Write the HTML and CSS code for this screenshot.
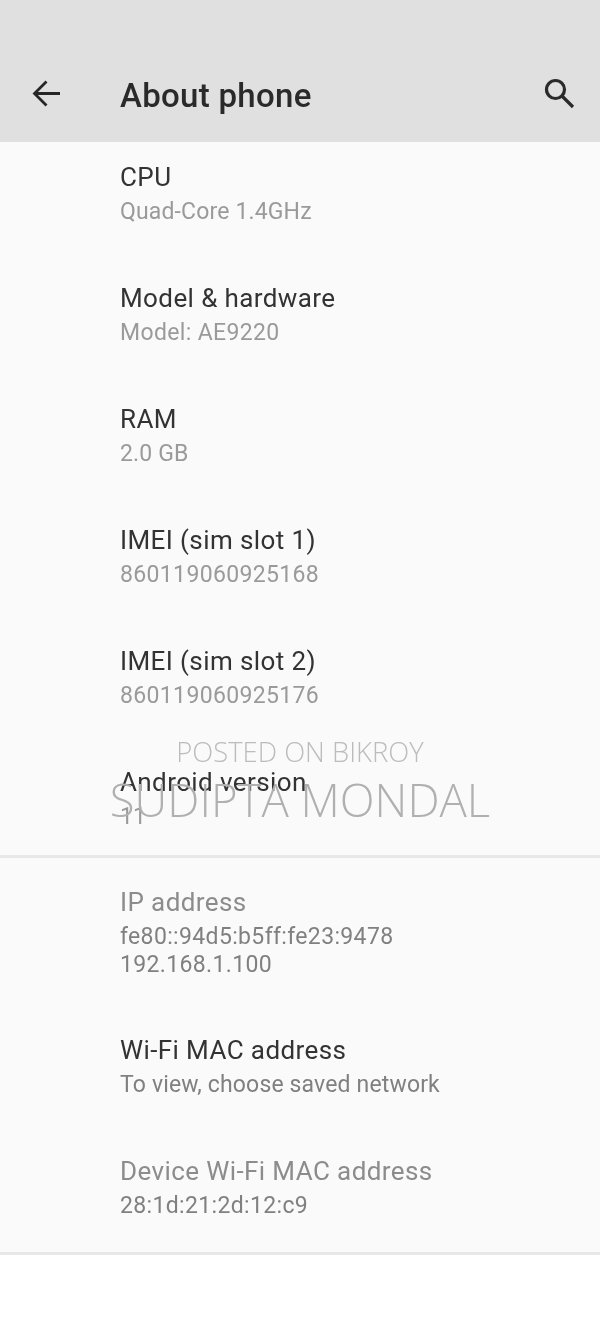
FILE: index.html
```html
<!DOCTYPE html>
<html lang="en">
<head>
<meta charset="utf-8">
<title>About phone</title>
<link rel="stylesheet" href="styles.css">
</head>
<body>
<div class="screen">
  <header class="appbar">
    <svg class="icon" width="34" height="34" viewBox="0 0 34 34" fill="none" stroke="#262626" stroke-width="2.800"><path d="M30 17.500H5.500M16.500 5.500 4.500 17.500 16.500 29.500"/></svg>
    <h1 class="title">About phone</h1>
    <svg class="icon search" width="34" height="34" viewBox="0 0 34 34" fill="none" stroke="#2a2a2a" stroke-width="3.200"><circle cx="13.500" cy="13.500" r="9"/><path d="M20 20 31 31"/></svg>
  </header>
  <main class="content">
    <section class="group first">
      <div class="row"><div class="label">CPU</div><div class="value">Quad-Core 1.4GHz</div></div>
      <div class="row"><div class="label">Model &amp; hardware</div><div class="value num">Model: AE9220</div></div>
      <div class="row"><div class="label">RAM</div><div class="value">2.0 GB</div></div>
      <div class="row"><div class="label">IMEI (sim slot 1)</div><div class="value num">860119060925168</div></div>
      <div class="row"><div class="label">IMEI (sim slot 2)</div><div class="value num">860119060925176</div></div>
      <div class="row last"><div class="label">Android version</div><div class="value">11</div></div>
    </section>
    <section class="group second">
      <div class="row ip"><div class="label muted">IP address</div><div class="value dark num">fe80::94d5:b5ff:fe23:9478<br>192.168.1.100</div></div>
      <div class="row"><div class="label">Wi-Fi MAC address</div><div class="value dark">To view, choose saved network</div></div>
      <div class="row last"><div class="label muted">Device Wi-Fi MAC address</div><div class="value dark num">28:1d:21:2d:12:c9</div></div>
    </section>
  </main>
  <div class="watermark">
    <div class="wm-small">POSTED ON BIKROY</div>
    <div class="wm-large">SUDIPTA MONDAL</div>
  </div>
</div>
</body>
</html>
```
FILE: styles.css
```css
* { box-sizing: border-box; }
html, body { margin: 0; padding: 0; }
body { background: #fff; font-family: Roboto, "Liberation Sans", sans-serif; }
.screen { position: relative; width: 600px; height: 1333px; overflow: hidden; background: #fff; filter: blur(0.45px); }
.appbar { height: 142px; background: #e0e0e0; display: flex; align-items: flex-start; padding: 76px 24px 0 30px; }
.icon { flex: none; }
.title { margin: 1px 0 0 56px; flex: 1; font-size: 33px; line-height: 38px; font-weight: 500; color: #2a2a2a; letter-spacing: 0.3px; }
.content { background: #fafafa; }
.group { padding-left: 120px; border-bottom: 3px solid #e8e8e8; }
.first { padding-top: 19px; height: 716px; }
.second { padding-top: 28px; height: 397px; }
.row { padding-bottom: 54px; }
.row.ip { padding-bottom: 53px; }
.row.last { padding-bottom: 0; }
.label { font-size: 26px; line-height: 33px; color: #333; letter-spacing: 0.4px; }
.label.muted { color: #8c8c8c; }
.value { font-size: 23px; line-height: 28px; padding: 4px 0 2px; color: #9a9a9a; letter-spacing: 0.15px; }
.value.num { letter-spacing: 0.35px; }
.value.dark { color: #808080; }
.watermark { position: absolute; left: 0; top: 735px; width: 600px; text-align: center; font-family: "Open Sans", sans-serif; font-weight: 300; color: #b0b0b0; }
.wm-small { font-size: 27.400px; line-height: 34px; color: #bcbcbc; }
.wm-large { font-size: 45.500px; line-height: 60px; }
```
